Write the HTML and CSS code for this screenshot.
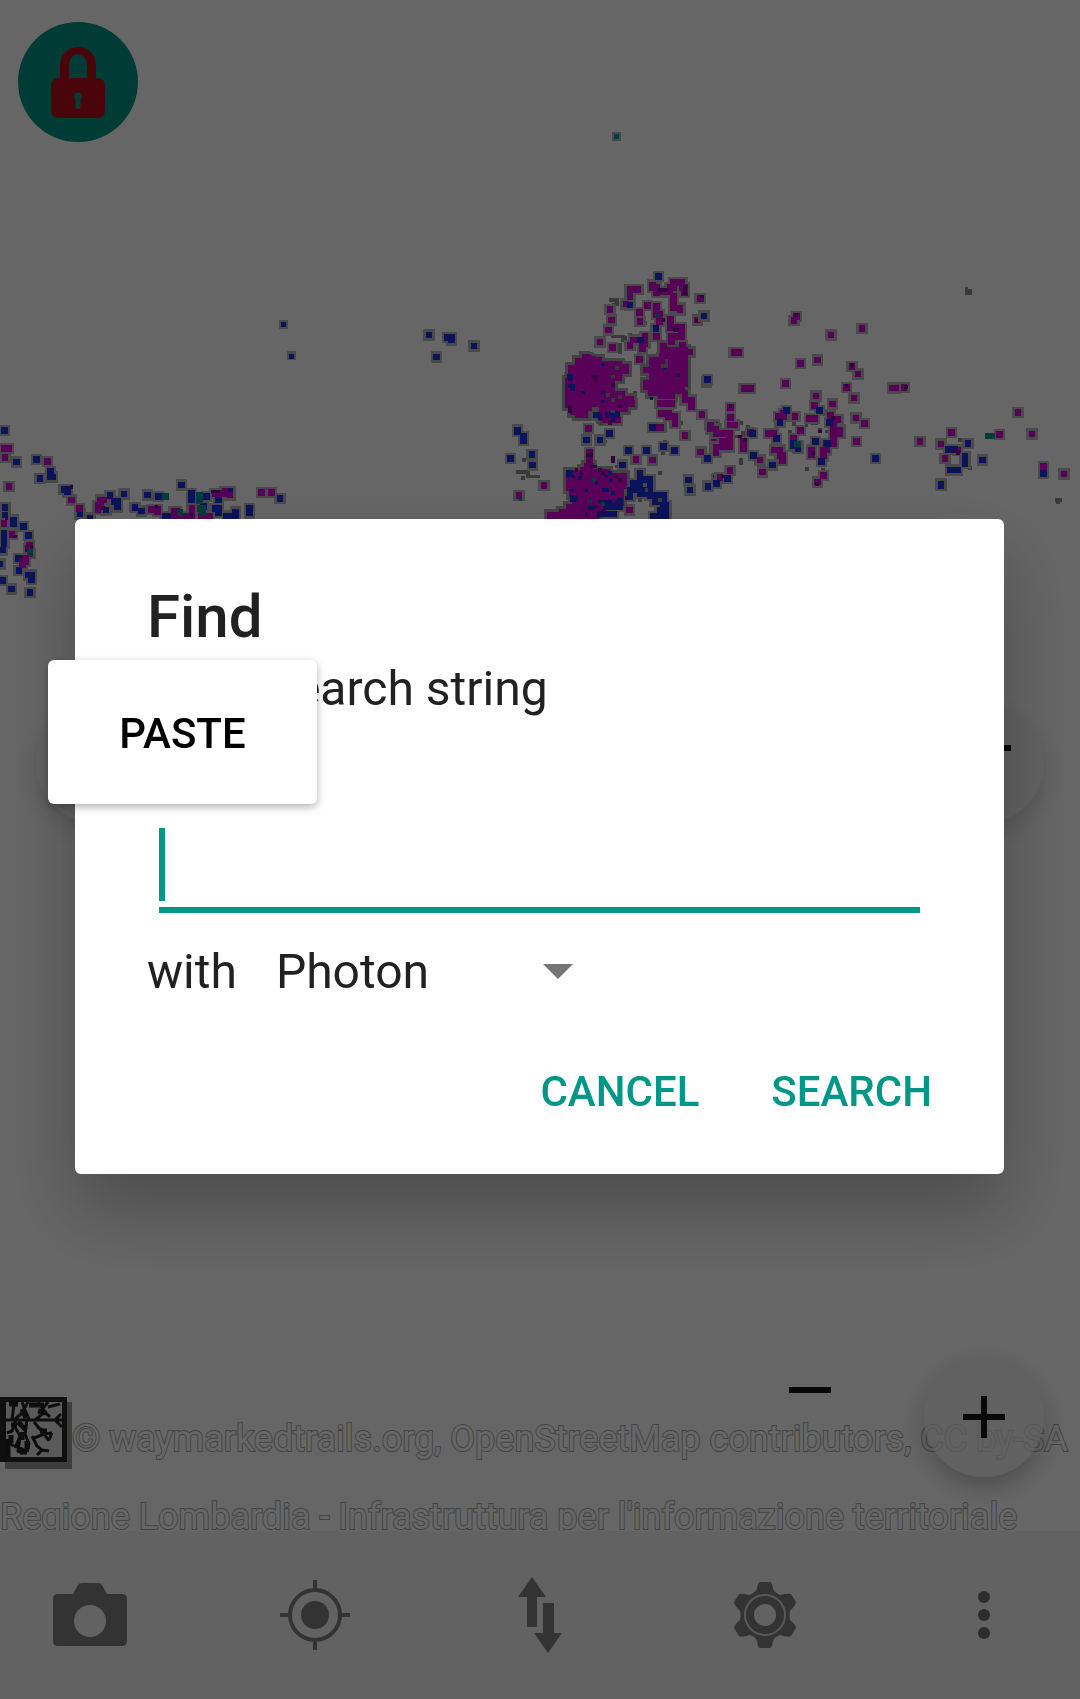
FILE: index.html
```html
<!DOCTYPE html>
<html lang="en">
<head>
<meta charset="utf-8">
<meta name="viewport" content="width=device-width, initial-scale=1">
<title>Find</title>
<link rel="stylesheet" href="styles.css">
</head>
<body>
<main class="map">
  <svg class="tiles" viewBox="0 0 1080 1531" preserveAspectRatio="xMinYMin slice" aria-hidden="true">
    <defs>
      <path id="west-navy" d="M13 92h0M50 186h0M110 178h0M152 215v16h6M120 235h0M192 268h10v8M545 255h0M330 287h0M372 282h0M442 285h0M475 290h0M840 295h0M748 325v14M405 322h0M425 333h0M342 305h10v16M240 342h0M318 330h0M575 280v20M655 300h0M645 325h10v12M680 348h26v-12M495 350h20M15 322h0M15 345h0M40 360v10M70 380h0M85 407h0M12 400v30M8 450h0M0 492h0M8 542h0M35 567h0M90 578h0M55 475h0M57 512h0M85 525h10v14M85 445h0M270 354h0M620 290h0M610 320h0M690 275h0"/>
      <path id="west-purple" d="M12 145h14M15 172h0M142 184h0M27 260h0M215 300h0M238 325h0M312 300h-10v16h-8v12M454 328h18v6M785 277h0M815 277h0M645 280h30v-6M690 285h0M12 370h0M36 404h0M88 436h0M90 460h0M76 475v10h-8v8M530 335h-8v14h54v-24M605 350h24"/>
      <path id="mid-navy" d="M87 225h0M142 232h12v8M222 258h0M110 291h0M775 50h0M912 168h0M352 510v4M370 530v12M332 596h0M396 584v0M397 615h0M590 465h0M625 465h24M560 540h0M600 540h0M628 520h0M686 572h0M740 572h0M790 560h0M824 572h0M920 595h0M865 665h0M924 678h0M508 640h0M668 615h0M720 640v18h30v16M690 690h60v16h40v30h8v30M760 770h20v-20M700 670h20M720 700h16M765 725h10M690 710h0M620 740h40v-16M690 135h0M722 240h0M768 205h0M758 502h0M520 715h0M600 762h40M510 352h0"/>
      <path id="mid-purple" d="M690 88h24M690 110h0M678 132h0M758 75v8h12v14M790 96h20v-14h10v-14h26v14h8v16M820 110v34h20v6M900 115h0M892 180h0M630 148h0M635 180h0M626 210h0M770 140v24h8v20M742 136h0M718 157h0M720 184h0M812 178v24h32v28h-30v14M770 230h0M735 230v20h-8v16M700 240h0M690 256h0M600 246h0M638 262h0M718 298h0M848 256v20h22M920 366h0M855 400v20h20v20M906 463h0M780 430h34M785 460h20v10h20v20M775 502h8M930 495h14v70M903 576h0M855 526h0M565 505h0M568 578v20M708 598h0M432 676h0M357 706h0M758 600h0M950 656h0M688 750h0M612 480h40M696 430h0"/>
      <path id="east-navy" d="M72 168h0M82 358h0M320 452h0M300 487h0M290 535h0M218 520h0M220 587h0M278 615h0M82 596h0M25 660h0M30 690h0M110 670h0M142 655h0M84 680h0M340 550v8h14v8M418 452h0M448 488h0M406 545h0M442 550h0M424 605h0M586 596h0M783 672v4M805 568h20M855 590v20M812 630h20M864 550h0M907 600h0M1090 640h0"/>
      <path id="east-purple" d="M62 115h0M342 182h0M350 170h0M453 225h0M546 206h0M162 278h14M362 310h0M413 300h0M516 320h0M534 342h0M500 382h0M522 414h0M316 370h0M192 386h20M638 384h8M672 382h0M152 442h0M152 472h0M408 408h0M404 436h0M458 432h0M296 470h14v-10M345 470h0M388 476h16M452 465v14h22M528 474h0M554 490h0M92 495v12h16v14h40v40h-40v16M128 545h0M150 495h14M190 545v20M212 518h0M265 520h16M362 512h0M340 536h0M284 570h16v16h8v16M240 600h0M248 636h0M62 576h0M150 632h0M120 652h0M460 500v10h20v10h-20v30h-20v20h-10v18M395 570v14M430 646h0M412 666h0M530 545h0M720 544h0M815 518h0M783 552h0M832 570h0M795 596h0M958 524h0M1014 458h0M1056 522h0M1090 620h0M1152 642h0"/>
      <path id="grove" d="M585 290h22v12h60v10h20v30h-20v20h-22v30h30v16h28v34h-20v14h-30v26h-56v-40h-22v12h-10v20h-40v-10h-16v-20h-14v-90h10v-40h20v-20h20v-12h20zM780 250h22v12h62v120h-10v20h-30v16h-50v-10h-30v-18h-16v-30h18v-20h-18v-20h20v-30h30zM497 630h44v-10h10v-12h30v20h50v10h50v50h-10v50h-50v20h-20v20h-160v-22h36v-10h20v-14h20v-20h-10v-20h-10v-30z"/>
      <path id="speck-navy" d="M610 314h0M510 378h10v10M550 398h0M610 398h0M796 325h0M836 346h0M755 416h0M610 425h0M650 460h0M516 692h0M560 692h0M632 660h0M590 670h0M640 700h0M590 740h0M560 762h0M540 655h0M620 650h0M612 690h10M600 725h30M520 650h0M650 725v20M570 745h10M630 640h0M600 465v10M640 480h0"/>
      <path id="speck-dark" d="M580 350h8v10M640 375h0M780 90h20M855 80v20M545 640h0M610 640h0M660 660h0M680 715h0M530 630h0M630 490h0M640 595v10M660 440h0M510 440v14M565 585h10M575 620h10M600 630h0M650 650h0M790 180h0M825 210h10M890 182h0M610 755h0"/>
    </defs>
    <g class="far"><path class="halo" d="M616 136h0"/><path class="teal" d="M616 136h0"/><path class="halo" d="M283 324h0M291 355h0"/><path class="navy" d="M283 324h0M291 356h0"/></g>
    <g class="region" transform="translate(0 400) scale(.3333)">
      <use href="#west-navy" class="halo"/><use href="#west-purple" class="halo"/>
      <use href="#west-navy" class="navy"/><use href="#west-purple" class="purple"/>
      <path class="teal" d="M497 290h0M598 285v18M600 325h8v14M540 338h0M90 458h0"/>
      <path class="speck dark" d="M215 262h0M310 325h0M470 322h0M640 275h14M575 345h0M95 440h0M45 410h0M20 355h0"/>
    </g>
    <g class="region" transform="translate(400 260) scale(.3333)">
      <path class="speck shade" d="M632 120h20v14h-10M640 230h30v10M660 256v20M372 600h0M355 636h30v14h30M795 545h0M362 718h0M676 235h0M870 690h0M370 655h0M735 190h0M750 225h0M690 225h0M820 470h0M845 490h0M705 400h0M650 620h0M780 640h0M560 520h0M615 545h0M790 580h0"/>
      <use href="#mid-navy" class="halo"/><use href="#mid-purple" class="halo"/><use href="#grove" class="halo-area"/>
      <use href="#grove" class="area"/>
      <use href="#mid-purple" class="purple"/><use href="#mid-navy" class="navy"/>
      <use href="#speck-navy" class="speck navy"/><use href="#speck-dark" class="speck dark"/>
      <path class="speck teal" d="M580 660h0M610 733h0M572 725h0M772 168h0M362 718h0"/>
      <path class="speck shade" d="M652 325h0M640 350h0M790 318h10v-14M660 412h0M640 420h0M625 405h0M720 720h0M740 690h0M780 720h0M640 455h0M605 490h0"/>
    </g>
    <g class="region" transform="translate(680 260) scale(.3333)">
      <path class="speck shade" d="M860 92h10v8h-10M1130 720h10M170 530h20v-10M184 600v10M382 628h0M400 490h10M342 492h0M420 510h0M175 490h8M180 545h0M205 500h0M330 515h0M380 495h0M440 515h0M430 630h0M840 540h0M870 625h0M860 88h0M1134 728h0"/>
      <use href="#east-navy" class="halo"/><use href="#east-purple" class="halo"/>
      <use href="#east-purple" class="purple"/><use href="#east-navy" class="navy"/>
      <path class="teal" d="M926 528h10M352 552h0"/>
      <path class="speck dark" d="M66 110h0M350 165h0M516 315h0M500 378h0M678 382h0M152 438h0M180 530h0M195 540h0M420 515h0M460 475h0M412 672h0M400 580h0M130 650h0M820 575h0M835 580h0"/>
    </g>
  </svg>

  <button class="fab fab-lock" aria-label="Unlock">
    <svg viewBox="0 0 120 120" aria-hidden="true"><path fill="#b90d19" fill-rule="evenodd" d="M42 56V43a18 18 0 0 1 36 0v13h1q8 0 8 8v24q0 8-8 8H41q-8 0-8-8V64q0-8 8-8zM51 56h18V43a9 11 0 0 0-18 0zM57.500 77.500V86q2.500 2 5 0v-8.500a4 4 0 1 0-5 0z"/></svg>
  </button>
  <button class="fab fab-left" aria-label="Previous"></button>
  <button class="fab fab-right" aria-label="Next"><svg viewBox="0 0 120 120" aria-hidden="true"><path d="M45 42h42v6H45z"/></svg></button>

  <footer class="credits">
    <p class="credit">
      <svg class="trail-logo" viewBox="0 0 72 72" aria-hidden="true">
        <path fill="#999" d="M5 5h67v67H5z"/><path fill="#262626" d="M0 0h67v65H0z"/><path fill="#e0e0e0" d="M6 5h56v55H6z"/>
        <path fill="none" stroke="#222" stroke-width="3" d="M6 23h56M61 17l-6 6 7 7M22 5l3 8 4 9M28 5l-6 11-8 7M38 5l7 10-10 8M48 5l-8 10M14 8l-2 14M60 7l-12 3M45 15l5 5M16 23l-4 11-5 2M15 30l5 9-5 12M27 23l-2 14 4 10-2 8M34 25l10 12 8-1M37 30l6 3M44 37l-12 5M52 36l-3 7M44 37l5 7M32 39l5 10 5 4-5 5M42 53l7 1M20 40l-2 14 5 2M7 45l7 4M19 50l8 5"/>
        <path fill="none" stroke="#222" stroke-width="5" d="M9 7h9M29 8h15M8 42v18M11 38v8M18 25l8 8M22 12l4 9M20 55h7M38 14l8 2M40 34h7M22 35v8M11 28h6M27 44v8"/>
      </svg><span>© waymarkedtrails.org, OpenStreetMap contributors, CC by-SA</span>
    </p>
    <p class="credit">Regione Lombardia - Infrastruttura per l'informazione territoriale</p>
  </footer>

  <button class="fab fab-minus" aria-label="Zoom out"><svg viewBox="0 0 120 120" aria-hidden="true"><path d="M39 57h42v6H39z"/></svg></button>
  <button class="fab fab-plus" aria-label="Zoom in"><svg viewBox="0 0 120 120" aria-hidden="true"><path d="M39 57h18V39h6v18h18v6H63v18h-6V63H39z"/></svg></button>
</main>

<nav class="toolbar" aria-label="Tools">
  <button class="tool" aria-label="Photos"><svg viewBox="0 0 80 80" aria-hidden="true"><path fill-rule="evenodd" d="M23 19l5-9q1-2 4-2h16q3 0 4 2l5 9h15q5 0 5 5v42q0 5-5 5H8q-5 0-5-5V24q0-5 5-5zM40 30a16 16 0 1 0 0 32 16 16 0 1 0 0-32z"/></svg></button>
  <button class="tool" aria-label="Locate"><svg viewBox="0 0 80 80" aria-hidden="true"><circle cx="40" cy="40" r="14"/><path fill="none" stroke="#808080" stroke-width="4" d="M40 15a25 25 0 1 0 0 50 25 25 0 1 0 0-50zM40 5v10M40 65v10M5 40h10M65 40h10"/></svg></button>
  <button class="tool" aria-label="Transfer"><svg viewBox="0 0 80 80" aria-hidden="true"><path d="M32 2l14 20h-9v30H27V22h-9zM43 28h11v30h8L48 78 34 58h9z"/></svg></button>
  <button class="tool" aria-label="Preferences"><svg viewBox="0 0 80 80" aria-hidden="true">
    <path fill-rule="evenodd" d="M35 7h10q2 0 3 7 1 3 7 6 8-2 11-1l5 8q0 3-6 9-1 4 0 9 6 5 6 8l-5 8q-2 2-11-1-6 2-7 6-1 7-3 7H35q-2 0-3-7-1-4-7-6-9 3-11 1l-5-8q0-3 6-8 1-5 0-9-6-6-6-9l5-8q2-1 11 1 6-3 7-6 1-7 3-7zM40 29a11 11 0 1 0 0 22 11 11 0 1 0 0-22z"/><circle cx="40" cy="40" r="20" fill="none" stroke="#ddd" stroke-width="2"/></svg></button>
  <button class="tool tool-more" aria-label="More options"><svg viewBox="0 0 80 80" aria-hidden="true"><circle cx="40" cy="22" r="6"/><circle cx="40" cy="40" r="6"/><circle cx="40" cy="58" r="6"/></svg></button>
</nav>

<div class="scrim">
  <form class="dialog" role="dialog" aria-labelledby="find-title">
    <h1 class="title" id="find-title">Find</h1>
    <label class="prompt" for="query">Enter search string</label>
    <div class="field"><input id="query" type="text" autocomplete="off"><span class="caret"></span></div>
    <div class="engine">
      <label for="engine">with</label>
      <div class="picker">
        <select id="engine"><option>Photon</option></select>
        <svg class="arrow" viewBox="0 0 30 15" aria-hidden="true"><path d="M0 0h30L15 15z"/></svg>
      </div>
    </div>
    <div class="actions">
      <button class="action" type="button">CANCEL</button>
      <button class="action" type="button">SEARCH</button>
    </div>
    <button class="paste" type="button">PASTE</button>
  </form>
</div>
</body>
</html>
```
FILE: styles.css
```css
* {
  box-sizing: border-box;
}

body {
  display: flex;
  flex-direction: column;
  min-height: 100vh;
  margin: 0;
  background: #fff;
  color: #212121;
  font-family: Roboto, "Noto Sans", sans-serif;
  font-size: 48px;
}

button,
input,
select {
  margin: 0;
  padding: 0;
  border: 0;
  background: none;
  color: inherit;
  font: inherit;
}

/* Map */

.map {
  position: relative;
  display: flex;
  flex: 1;
  flex-direction: column;
  justify-content: flex-end;
  overflow: hidden;
}

.tiles {
  position: absolute;
  inset: 0;
  width: 100%;
  height: 100%;
  shape-rendering: crispEdges;
}

.region,
.far {
  fill: none;
  stroke-linecap: square;
  stroke-linejoin: miter;
  stroke-width: 20px;
}

.far {
  stroke-width: 5px;
}

.halo {
  stroke: #b8b8b8;
}

.shade {
  stroke: #909090;
}

.region .halo {
  stroke-width: 34px;
}

.far .halo {
  stroke-width: 9px;
}

.halo-area {
  stroke: #a8a8a8;
  stroke-width: 18px;
}

.area {
  fill: #de00de;
}

.purple {
  stroke: #d800d8;
}

.navy {
  stroke: #1c30e0;
}

.teal {
  stroke: #009696;
}

.dark {
  stroke: #820096;
}

.region .speck {
  stroke-width: 11px;
}

.fab {
  position: absolute;
  width: 120px;
  height: 120px;
  border-radius: 50%;
  fill: #141414;
}

.fab svg {
  display: block;
}

.fab-lock {
  top: 22px;
  left: 18px;
  background: #009688;
}

.fab-left,
.fab-right {
  top: 703px;
  background: rgba(240, 240, 240, 0.7);
  box-shadow: 0 10px 24px rgba(0, 0, 0, 0.16);
}

.fab-left {
  left: 36px;
}

.fab-right {
  right: 36px;
}

.fab-minus {
  right: 210px;
  bottom: 81px;
}

.fab-plus {
  right: 36px;
  bottom: 54px;
  background: rgba(236, 236, 236, 0.7);
  box-shadow: 0 10px 24px rgba(0, 0, 0, 0.24);
}

.credits {
  position: relative;
  height: 146px;
}

.credit {
  display: flex;
  height: 78px;
  margin: 0;
  color: #fff;
  font-size: 36px;
  line-height: 108px;
  white-space: nowrap;
  -webkit-text-stroke: 2px #a8a8a8;
  paint-order: stroke fill;
}

.trail-logo {
  flex: none;
  width: 72px;
  height: 72px;
  margin-top: 12px;
}

/* Bottom toolbar */

.toolbar {
  position: relative;
  display: flex;
  justify-content: space-between;
  height: 168px;
  padding-right: 12px;
  background: #f5f5f5;
}

.tool {
  display: flex;
  align-items: center;
  justify-content: center;
  width: 180px;
  fill: #808080;
}

.tool svg {
  width: 80px;
  height: 80px;
}

.tool-more {
  width: 168px;
  fill: #707070;
}

/* Find dialog */

.scrim {
  position: fixed;
  inset: 0;
  display: flex;
  align-items: center;
  padding: 0 76px 6px 75px;
  background: rgba(0, 0, 0, 0.6);
}

.dialog {
  position: relative;
  display: flex;
  flex: 1;
  flex-direction: column;
  padding: 62px 72px 11px;
  border-radius: 6px;
  background: #fff;
  box-shadow: 0 36px 72px rgba(0, 0, 0, 0.26);
}

.title {
  margin: 0;
  font-size: 60px;
  font-weight: 500;
  line-height: 72px;
}

.prompt {
  margin-top: 6px;
  line-height: 60px;
}

.field {
  position: relative;
  margin: 96px 12px 0;
}

.field input {
  display: block;
  width: 100%;
  height: 98px;
  border-bottom: 6px solid #009688;
  outline: 0;
}

.caret {
  position: absolute;
  bottom: 12px;
  left: 0;
  width: 6px;
  height: 73px;
  background: #009688;
}

.engine {
  display: flex;
  align-items: center;
  gap: 39px;
  height: 72px;
  margin-top: 22px;
}

.picker {
  position: relative;
}

.picker select {
  width: 324px;
  height: 72px;
  appearance: none;
}

.arrow {
  position: absolute;
  top: 29px;
  right: 27px;
  width: 30px;
  height: 15px;
  fill: #757575;
  pointer-events: none;
}

.actions {
  display: flex;
  justify-content: flex-end;
  gap: 72px;
  margin-top: 12px;
}

.action {
  height: 144px;
  color: #009688;
  font-size: 42px;
  font-weight: 500;
}

.paste {
  position: absolute;
  top: 141px;
  left: -27px;
  width: 269px;
  height: 144px;
  padding-top: 2px;
  border-radius: 6px;
  background: #fff;
  box-shadow: 0 3px 9px rgba(0, 0, 0, 0.3);
  color: #000;
  font-size: 42px;
  font-weight: 500;
}
```
